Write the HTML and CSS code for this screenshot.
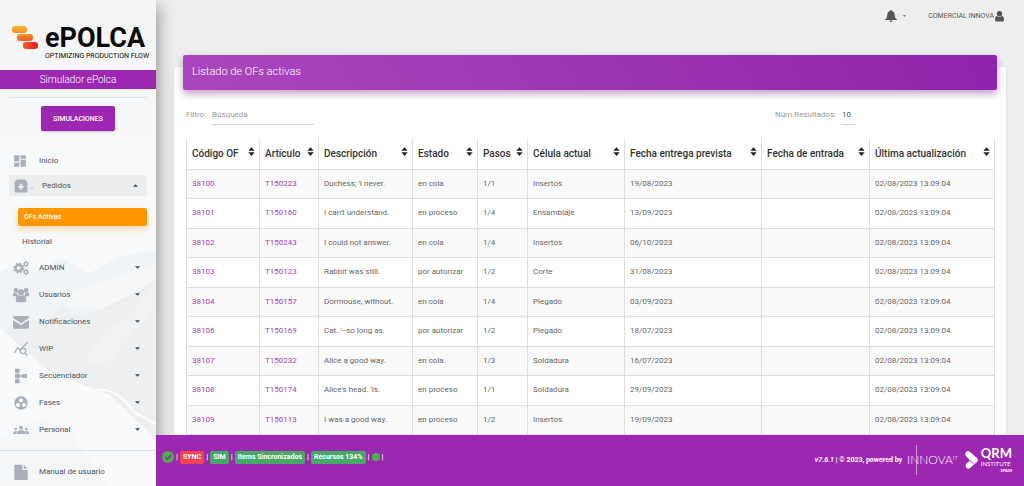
FILE: index.html
```html
<!DOCTYPE html>
<html lang="es">
<head>
<meta charset="utf-8">
<meta name="viewport" content="width=device-width, initial-scale=1">
<title>ePolca - Listado de OFs activas</title>
<link rel="stylesheet" href="styles.css">
</head>
<body>
<svg class="sprite" aria-hidden="true">
  <symbol id="sort" viewBox="0 0 8 10"><path d="M4 0 7.6 4.2H.4zM4 10 .4 5.8h7.2z"/></symbol>
  <symbol id="caret" viewBox="0 0 6 3"><path d="M0 0h6L3 3z"/></symbol>
  <symbol id="caret-up" viewBox="0 0 6 3"><path d="M0 3h6L3 0z"/></symbol>
</svg>
<div class="app">
  <aside class="sidebar">
    <svg class="scenery" viewBox="0 0 156 236" preserveAspectRatio="none" aria-hidden="true">
      <path fill="#f1f4f6" d="M0 22 20 13 38 20 62 8 88 24 118 7 156 0V236H0z"/>
      <path fill="#f5f7f8" d="M48 50 92 34 156 14V44L120 66 96 60z"/>
      <path fill="#eeeff0" d="M0 84 26 68 44 74 62 56 78 66 104 58 156 30V210L100 178 60 140z"/>
      <path fill="#f1f2f3" d="M84 112 104 82 128 66 156 34V60L128 88 108 118z"/>
      <path fill="#f8fafb" d="M0 78 50 122 110 145 156 190V236H0z"/>
      <path fill="none" stroke="#fcfdfd" stroke-width="2" d="M96 140Q118 138 134 162L156 174"/>
      <path fill="#f4f6f8" d="M0 190 40 168 70 182 108 236H0z"/>
    </svg>
    <div class="brand">
      <svg class="brand-mark" viewBox="0 0 26 24" aria-hidden="true">
        <defs>
          <linearGradient id="g1" x2="0" y2="1"><stop stop-color="#fbb33b"/><stop offset="1" stop-color="#f7941d"/></linearGradient>
          <linearGradient id="g2" x2="0" y2="1"><stop stop-color="#f6921e"/><stop offset="1" stop-color="#f15a24"/></linearGradient>
          <linearGradient id="g3" x2="1"><stop stop-color="#f15a24"/><stop offset="1" stop-color="#ed1c24"/></linearGradient>
        </defs>
        <rect width="15" height="7" rx="3" fill="url(#g1)"/>
        <rect x="5" y="8" width="16" height="7" rx="3" fill="url(#g2)"/>
        <rect x="11" y="16" width="15" height="7" rx="3" fill="url(#g3)"/>
      </svg>
      <div class="brand-text"><span class="brand-name">ePOLCA</span><span class="brand-tag">OPTIMIZING PRODUCTION FLOW</span></div>
    </div>
    <div class="site-name">Simulador ePolca</div>
    <div class="sim-box"><button class="sim-button" type="button">SIMULACIONES</button></div>
    <nav class="menu">
      <a class="item first" href="#"><svg class="icon" viewBox="0 0 24 24"><path d="M2 2h9v11H2zM13 2h9v6h-9zM13 10h9v12h-9zM2 15h9v7H2z"/></svg><span>Inicio</span></a>
      <a class="item open" href="#"><svg class="icon" viewBox="0 0 24 24"><path fill-rule="evenodd" d="M5 1h14l4 4v16a2 2 0 0 1-2 2H3a2 2 0 0 1-2-2V5zM10 8v4H6l6 7 6-7h-4V8z"/></svg><i class="dash">_</i><span>Pedidos</span><svg class="caret"><use href="#caret-up"/></svg></a>
      <a class="sub active" href="#">OFs Activas</a>
      <a class="sub" href="#">Historial</a>
      <a class="item" href="#"><svg class="icon" viewBox="0 0 24 24"><g fill="none" stroke="currentColor"><circle cx="8.500" cy="12" r="4.800" stroke-width="3.400"/><circle cx="8.500" cy="12" r="7.200" stroke-width="2.200" stroke-dasharray="3 2.650"/><circle cx="19.500" cy="6" r="2.600" stroke-width="2"/><circle cx="19.500" cy="6" r="4" stroke-width="1.200" stroke-dasharray="2 2.200"/><circle cx="19.500" cy="18" r="2.600" stroke-width="2"/><circle cx="19.500" cy="18" r="4" stroke-width="1.200" stroke-dasharray="2 2.200"/></g></svg><span>ADMIN</span><svg class="caret"><use href="#caret"/></svg></a>
      <a class="item" href="#"><svg class="icon" viewBox="0 0 24 24"><circle cx="4.500" cy="5" r="3.500"/><circle cx="19.500" cy="5" r="3.500"/><circle cx="12" cy="8" r="4.700"/><path d="M0 14V11q0-3 2-3 2 1.500 4 1-.5 3 1.500 5zM24 14V11q0-3-2-3-2 1.500-4 1 .5 3-1.500 5zM4 20q0-8 4-8 4 3 8 0 4 0 4 8 0 3-3 3H7q-3 0-3-3"/></svg><span>Usuarios</span><svg class="caret"><use href="#caret"/></svg></a>
      <a class="item" href="#"><svg class="icon" viewBox="0 0 24 24"><path d="M0 5q0-2 2-2h20q2 0 2 2v1L12 14 0 6zM0 9l12 8 12-8v11q0 2-2 2H2q-2 0-2-2z"/></svg><span>Notificaciones</span><svg class="caret"><use href="#caret"/></svg></a>
      <a class="item" href="#"><svg class="icon" viewBox="0 0 24 24"><g fill="none" stroke="currentColor" stroke-width="2"><path d="M2 18 7 10l4 4 3-5M14 10 22 2"/><circle cx="15" cy="15" r="4"/><path d="m18 18 4 4"/></g></svg><span>WIP</span><svg class="caret"><use href="#caret"/></svg></a>
      <a class="item" href="#"><svg class="icon" viewBox="0 0 24 24"><path d="M3 1h7v6H3zM3 9h7v6H3zM3 17h7v6H3zM14 9h7v6h-7zM6 6h2v12H6zM9 11h6v2H9z"/></svg><span>Secuenciador</span><svg class="caret"><use href="#caret"/></svg></a>
      <a class="item" href="#"><svg class="icon" viewBox="0 0 24 24"><path fill-rule="evenodd" d="M12 2a10 10 0 1 0 .01 0zM12 5a3 3 0 1 1-.01 0zM7.500 12a3 3 0 1 1-.01 0zM16.500 12a3 3 0 1 1-.01 0z"/></svg><span>Fases</span><svg class="caret"><use href="#caret"/></svg></a>
      <a class="item" href="#"><svg class="icon" viewBox="0 0 24 24"><circle cx="4" cy="10.500" r="2"/><circle cx="20" cy="10.500" r="2"/><circle cx="12" cy="8.500" r="3"/><path d="M0 18v-2q0-2.500 4-2.500l2 .5q-1 1-1 4zM24 18v-2q0-2.500-4-2.500l-2 .5q1 1 1 4zM6 18v-2q0-3.500 6-3.500t6 3.500v2z"/></svg><span>Personal</span><svg class="caret"><use href="#caret"/></svg></a>
    </nav>
    <a class="item manual" href="#"><svg class="icon" viewBox="0 0 24 24"><path d="M3 1h11v8h8v13q0 2-2 2H4q-2 0-2-2V2zM16 1l6 6h-6z"/></svg><span>Manual de usuario</span></a>
  </aside>
  <div class="page">
    <header class="topbar">
      <button class="bell" type="button" aria-label="Avisos"><svg viewBox="0 0 12 12"><path d="M6 0q1 0 1 1 2.600.600 2.600 3.500 0 3.500 2.400 5V10H0v-.500q2.400-1.500 2.400-5Q2.400 1.600 5 1q0-1 1-1M4.500 10.500h3Q7.300 12 6 12t-1.500-1.500"/></svg><svg class="bell-caret"><use href="#caret"/></svg></button>
      <a class="account" href="#">COMERCIAL INNOVA<svg viewBox="0 0 10 12"><circle cx="5" cy="3" r="3"/><path d="M0 10q0-4.600 2.200-4.600 2.800 2.400 5.600 0Q10 5.400 10 10q0 1.500-1.500 1.500h-7Q0 11.500 0 10"/></svg></a>
    </header>
    <main class="content">
      <section class="card">
        <h1 class="card-title">Listado de OFs activas</h1>
        <form class="filters">
          <div class="field"><label for="q">Filtro:</label><input id="q" class="search" type="text" placeholder="Búsqueda"></div>
          <div class="field count"><label for="n">Núm.Resultados:</label><select id="n" class="select"><option>10</option><option>25</option></select></div>
        </form>
        <table class="orders">
          <colgroup><col class="c-code"><col class="c-item"><col class="c-desc"><col class="c-state"><col class="c-steps"><col class="c-cell"><col class="c-due"><col class="c-in"><col class="c-upd"></colgroup>
          <thead><tr>
            <th><button type="button">Código OF<svg><use href="#sort"/></svg></button></th>
            <th><button type="button">Artículo<svg><use href="#sort"/></svg></button></th>
            <th><button type="button">Descripción<svg><use href="#sort"/></svg></button></th>
            <th><button type="button">Estado<svg><use href="#sort"/></svg></button></th>
            <th><button type="button">Pasos<svg><use href="#sort"/></svg></button></th>
            <th><button type="button">Célula actual<svg><use href="#sort"/></svg></button></th>
            <th><button type="button">Fecha entrega prevista<svg><use href="#sort"/></svg></button></th>
            <th><button type="button">Fecha de entrada<svg><use href="#sort"/></svg></button></th>
            <th><button type="button">Última actualización<svg><use href="#sort"/></svg></button></th>
          </tr></thead>
          <tbody>
            <tr><td><a href="#">38100</a></td><td><a href="#">T150223</a></td><td>Duchess; 'I never.</td><td>en cola</td><td>1/1</td><td>Insertos</td><td>19/08/2023</td><td></td><td>02/08/2023 13:09:04</td></tr>
            <tr><td><a href="#">38101</a></td><td><a href="#">T150160</a></td><td>I can't understand.</td><td>en proceso</td><td>1/4</td><td>Ensamblaje</td><td>13/09/2023</td><td></td><td>02/08/2023 13:09:04</td></tr>
            <tr><td><a href="#">38102</a></td><td><a href="#">T150243</a></td><td>I could not answer.</td><td>en cola</td><td>1/4</td><td>Insertos</td><td>06/10/2023</td><td></td><td>02/08/2023 13:09:04</td></tr>
            <tr><td><a href="#">38103</a></td><td><a href="#">T150123</a></td><td>Rabbit was still.</td><td>por autorizar</td><td>1/2</td><td>Corte</td><td>31/08/2023</td><td></td><td>02/08/2023 13:09:04</td></tr>
            <tr><td><a href="#">38104</a></td><td><a href="#">T150157</a></td><td>Dormouse, without.</td><td>en cola</td><td>1/4</td><td>Plegado</td><td>03/09/2023</td><td></td><td>02/08/2023 13:09:04</td></tr>
            <tr><td><a href="#">38106</a></td><td><a href="#">T150169</a></td><td>Cat. '--so long as.</td><td>por autorizar</td><td>1/2</td><td>Plegado</td><td>18/07/2023</td><td></td><td>02/08/2023 13:09:04</td></tr>
            <tr><td><a href="#">38107</a></td><td><a href="#">T150232</a></td><td>Alice a good way.</td><td>en cola</td><td>1/3</td><td>Soldadura</td><td>16/07/2023</td><td></td><td>02/08/2023 13:09:04</td></tr>
            <tr><td><a href="#">38108</a></td><td><a href="#">T150174</a></td><td>Alice's head. 'Is.</td><td>en proceso</td><td>1/1</td><td>Soldadura</td><td>29/09/2023</td><td></td><td>02/08/2023 13:09:04</td></tr>
            <tr><td><a href="#">38109</a></td><td><a href="#">T150113</a></td><td>I was a good way.</td><td>en proceso</td><td>1/2</td><td>Insertos</td><td>19/09/2023</td><td></td><td>02/08/2023 13:09:04</td></tr>
          </tbody>
        </table>
      </section>
    </main>
    <footer class="footer">
      <div class="status">
        <svg class="check" viewBox="0 0 12 12"><circle cx="6" cy="6" r="6" fill="#4caf50"/><path d="m3 6 2.200 2.200L9.200 4" fill="none" stroke="#8e24aa" stroke-width="1.500"/></svg><span>|</span>
        <span class="badge red">SYNC</span><span>|</span>
        <span class="badge">SIM</span><span>|</span>
        <span class="badge">Items Sincronizados</span><span>|</span>
        <span class="badge">Recursos 134%</span><span>|</span>
        <span class="dot"></span><span>|</span>
      </div>
      <div class="credits">
        <span><em>v7.6.1</em> | © 2023, powered by</span>
        <span class="innova">INNOVA<sup>IT</sup></span>
        <span class="qrm">
          <svg viewBox="0 0 13 18"><path fill="#fff" d="M1 1Q3-1 5 1L12 7Q13.500 9 12 11L5 17Q3 18.500 1.500 17 0 15 1 13L5 9.500 1 5Q-.500 3 1 1"/><path stroke="#9c27b0" d="M5 9.500 9 13.500"/></svg>
          <span class="qrm-text"><b>QRM</b><span>INSTITUTE</span><small>SPAIN</small></span>
        </span>
      </div>
    </footer>
  </div>
</div>
</body>
</html>
```
FILE: styles.css
```css
* { box-sizing: border-box; }
body { margin: 0; background: #eee; color: #4a5462; font: 400 8px/12px Roboto, "Liberation Sans", sans-serif; }
a { color: inherit; text-decoration: none; }
button, input, select { margin: 0; padding: 0; border: 0; background: none; font: inherit; color: inherit; appearance: none; }
.sprite { display: none; }
.app { display: grid; grid-template: minmax(0, 1fr) / 156px minmax(0, 1fr); height: 100vh; overflow: hidden; }

.sidebar { position: relative; z-index: 2; display: flex; flex-direction: column; min-height: 0; background: linear-gradient(#f2f4f6, #f7f9fb 35%, #f9fbfc); box-shadow: 0 8px 16px 2px rgba(0, 0, 0, .4); }
.scenery { position: absolute; left: 0; bottom: 0; width: 100%; height: 236px; z-index: -1; }
.brand { display: flex; height: 70px; padding: 26px 9px 0 12px; }
.brand-mark { flex: none; width: 26px; height: 24px; }
.brand-text { display: flex; flex-direction: column; margin-left: 7px; color: #0a0a0a; white-space: nowrap; }
.brand-name { font: 700 27px/24px Roboto, sans-serif; }
.brand-tag { font-size: 7px; line-height: 12px; }
.site-name { background: #9c27b0; color: #fff; font-size: 10px; font-weight: 300; line-height: 19px; text-align: center; }
.sim-box { margin: 8px 9px 0; padding-top: 8px; border-top: 1px solid #dfe2e4; text-align: center; }
.sim-button { width: 74px; height: 25px; border-radius: 2px; background: #9c27b0; color: #fff; font-size: 7px; font-weight: 500; box-shadow: 0 1px 2px rgba(156, 39, 176, .3); }
.menu { display: flex; flex-direction: column; gap: 6px; padding: 19px 9px 10px; }
.item { display: flex; align-items: center; height: 21px; padding: 0 7px 0 4px; border-radius: 2px; }
.item span { flex: 1; }
.icon { width: 16px; height: 16px; margin-right: 10px; fill: currentColor; color: #a9afbb; }
.caret { width: 5px; height: 3px; fill: #3c4858; }
.first { margin-bottom: -2px; }
.open { background: #ebedee; padding: 0 9px 0 5px; }
.first .icon, .open .icon { width: 14px; height: 14px; margin-right: 12px; }
.open .icon { margin-right: 2px; }
.dash { width: 12px; color: #a9afbb; font-style: normal; }
.sub { height: 19px; margin: 0 0 0 9px; padding-left: 4px; line-height: 19px; }
.sub.active { height: 18px; margin-top: 6px; padding-left: 6px; border-radius: 2px; background: #ff9800; color: #fff; font-size: 7px; font-weight: 500; box-shadow: 0 3px 7px rgba(255, 152, 0, .35); }
.manual { flex: 1; height: auto; border-top: 1px solid #dcdfe1; border-radius: 0; padding: 6px 13px 0; }

.page { display: grid; grid-template-rows: auto minmax(0, 1fr) auto; min-width: 0; min-height: 0; }
.topbar { display: flex; justify-content: flex-end; align-items: center; height: 32px; padding: 0 20px; color: #555; }
.bell { display: flex; align-items: center; gap: 6px; margin-right: 22px; }
.bell svg { width: 12px; height: 12px; fill: #555; }
.bell .bell-caret { width: 3px; height: 2px; }
.account { display: flex; align-items: center; gap: 1px; font-size: 7px; }
.account svg { width: 9px; height: 11px; fill: #555; }
.content { overflow: hidden; padding: 35px 18px 0; }
.card { min-height: 400px; padding: 0 12px; border-radius: 3px; background: #fff; box-shadow: 0 1px 3px rgba(0, 0, 0, .12); }
.card-title { position: relative; top: -12px; margin: 0 -3px -12px; padding: 0 9px 2px; border-radius: 2px; background: linear-gradient(60deg, #ab47bc, #8e24aa); color: #fff; font-size: 11px; font-weight: 300; line-height: 33px; box-shadow: 0 3px 10px rgba(0, 0, 0, .14), 0 4px 6px rgba(156, 39, 176, .3); }
.filters { display: flex; justify-content: space-between; padding: 15px 0 14px; color: #999; }
.field { display: flex; align-items: center; gap: 6px; line-height: 20px; }
.search, .select { height: 20px; border-bottom: 1px solid #d2d2d2; border-radius: 0; }
.search { width: 102px; }
.search::placeholder { color: #999; opacity: 1; }
.count { margin-right: 138px; }
.select { width: 14px; color: #495057; }

.orders { width: 100%; table-layout: fixed; border-collapse: collapse; color: #333; }
.c-code { width: 73px; } .c-item { width: 59px; } .c-desc { width: 94px; } .c-state { width: 65px; } .c-steps { width: 50px; }
.c-cell { width: 97px; } .c-due { width: 137px; } .c-in { width: 108px; } .c-upd { width: 125px; }
.orders th, .orders td { padding: 0 4px 0 5px; border: 1px solid #ddd; text-align: left; white-space: nowrap; }
.orders th { height: 30px; border-top: 0; }
.orders th button { display: flex; justify-content: space-between; align-items: center; width: 100%; font-size: 10px; font-weight: 500; }
.orders th svg { width: 7px; height: 9px; margin-bottom: 4px; fill: #222; }
.orders td { height: 29px; color: #666; }
.orders tbody tr:nth-child(odd) { background: #f9f9f9; }
.orders tbody tr:nth-child(even) td { height: 30px; }
.orders a { color: #a640b8; }

.footer { position: relative; z-index: 3; display: flex; justify-content: space-between; align-items: flex-start; height: 51px; padding: 9px 12px 0 6px; background: #9c27b0; color: #fff; font-weight: 500; }
.status { display: flex; align-items: center; gap: 2px; height: 26px; }
.check { width: 12px; height: 12px; }
.badge { padding: 0 3px; border-radius: 2px; background: #47a967; font-size: 7px; font-weight: 700; line-height: 13px; }
.red { background: #f44355; }
.dot { width: 8px; height: 8px; border-radius: 50%; background: #4caf50; }
.credits { display: flex; align-items: center; height: 32px; font-size: 7px; font-weight: 700; }
.innova { position: relative; margin-left: 5px; font: 300 12px/30px Lato, sans-serif; }
.innova::after { content: ""; position: absolute; left: 9px; top: 0; width: 1px; height: 30px; background: rgba(255, 255, 255, .5); }
.innova sup { font-size: 6px; line-height: 6px; vertical-align: 4px; }
.qrm { display: flex; align-items: center; gap: 3px; margin-left: 7px; }
.qrm svg { width: 13px; height: 18px; }
.qrm-text { display: flex; flex-direction: column; font: 400 6px/8px Lato, sans-serif; }
.qrm-text b { font-size: 13px; line-height: 13px; }
.qrm-text small { font-size: 4px; line-height: 5px; font-weight: 700; text-align: right; }
```
